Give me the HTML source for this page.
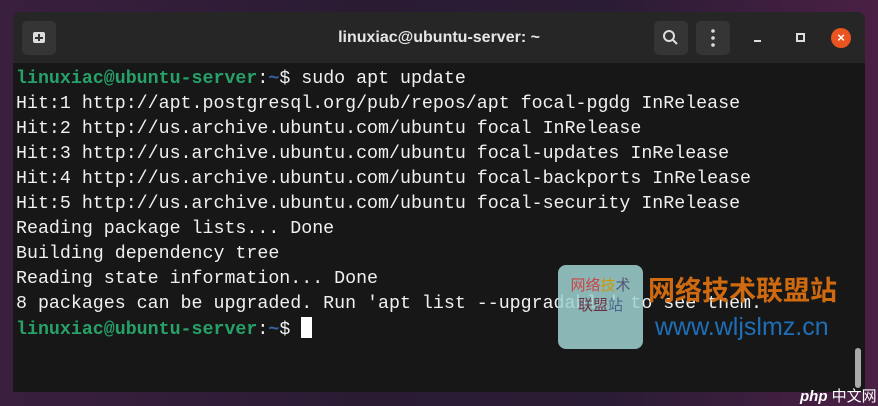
<!DOCTYPE html>
<html><head><meta charset="utf-8"><style>
body{margin:0;width:878px;height:405px;overflow:hidden;background:linear-gradient(90deg,#3a1f3f 0%,#2a1b33 40%,#2b1c35 70%,#4a2045 100%);position:relative;font-family:"Liberation Sans",sans-serif}
.win{position:absolute;left:13px;top:12px;width:852px;height:380px;background:#171717;border-radius:8px 8px 0 0;overflow:hidden}
.tb{height:51px;background:#262626;position:relative;color:#eee}
.title{position:absolute;left:0;right:0;top:17px;text-align:center;font-size:16px;font-weight:bold;color:#e6e6e6}
.btn{position:absolute;top:9px;width:34px;height:34px;background:#353535;border-radius:5px}
.term{position:absolute;left:3px;top:55px;font-family:"Liberation Mono",monospace;font-size:18.3px;line-height:25px;color:#f0f0f0;white-space:pre}
.g{color:#26a269;font-weight:bold}.b{color:#3465a4;font-weight:bold}
.cur{display:inline-block;width:11px;height:21px;background:#fff;vertical-align:-4px}
</style></head><body>
<div class="win">
<div class="tb">
<div class="btn" style="left:9px"><div style="position:absolute;left:11px;top:11px;width:12px;height:11px;background:#ddd;border-radius:2px"></div><div style="position:absolute;left:16px;top:13px;width:2px;height:7px;background:#353535"></div><div style="position:absolute;left:13px;top:16px;width:8px;height:2px;background:#353535"></div></div>
<div class="title">linuxiac@ubuntu-server: ~</div>
<div class="btn" style="left:641px"><svg width="34" height="34"><circle cx="15" cy="15" r="5" stroke="#ddd" stroke-width="2" fill="none"/><line x1="19" y1="19" x2="23" y2="23" stroke="#ddd" stroke-width="2"/></svg></div>
<div class="btn" style="left:683px"><svg width="34" height="34"><circle cx="17" cy="10" r="1.8" fill="#ddd"/><circle cx="17" cy="17" r="1.8" fill="#ddd"/><circle cx="17" cy="24" r="1.8" fill="#ddd"/></svg></div>
<div style="position:absolute;left:741px;top:28px;width:7px;height:2px;background:#ddd"></div>
<div style="position:absolute;left:783px;top:21px;width:5px;height:5px;border:2px solid #ddd"></div>
<div style="position:absolute;left:818px;top:16px;width:20px;height:20px;border-radius:50%;background:#e95420;color:#fff;font-size:13px;text-align:center;line-height:20px;font-weight:bold">×</div>
</div>
<div class="term"><span class="g">linuxiac@ubuntu-server</span>:<span class="b">~</span>$ sudo apt update
Hit:1 http://apt.postgresql.org/pub/repos/apt focal-pgdg InRelease
Hit:2 http://us.archive.ubuntu.com/ubuntu focal InRelease
Hit:3 http://us.archive.ubuntu.com/ubuntu focal-updates InRelease
Hit:4 http://us.archive.ubuntu.com/ubuntu focal-backports InRelease
Hit:5 http://us.archive.ubuntu.com/ubuntu focal-security InRelease
Reading package lists... Done
Building dependency tree
Reading state information... Done
8 packages can be upgraded. Run 'apt list --upgradable' to see them.
<span class="g">linuxiac@ubuntu-server</span>:<span class="b">~</span>$ <span class="cur"></span></div>
<div style="position:absolute;left:842px;top:336px;width:6px;height:40px;background:#aaa;border-radius:3px"></div>
</div>
<div style="position:absolute;left:558px;top:265px;width:85px;height:84px;background:rgba(160,210,210,0.85);border-radius:8px;font-family:'Noto Sans CJK SC',sans-serif;font-size:15px;line-height:20px;text-align:center;padding-top:10px;box-sizing:border-box"><span style="color:#c44">网络</span><span style="color:#c90">技</span><span style="color:#557">术</span><br><span style="color:#634">联盟</span><span style="color:#468">站</span></div>
<div style="position:absolute;left:648px;top:272px;font-family:'Noto Sans CJK SC',sans-serif;font-size:27px;font-weight:bold;color:#d06a10;line-height:34px">网络技术联盟站</div>
<div style="position:absolute;left:655px;top:312px;font-size:25px;color:#1e6fb8;line-height:30px">www.wljslmz.cn</div>
<div style="position:absolute;left:800px;top:385px;font-size:15px;color:#fff;font-style:italic;font-weight:bold">php <span style="font-family:'Noto Sans CJK SC',sans-serif;font-style:normal;font-weight:normal">中文网</span></div>
</body></html>
